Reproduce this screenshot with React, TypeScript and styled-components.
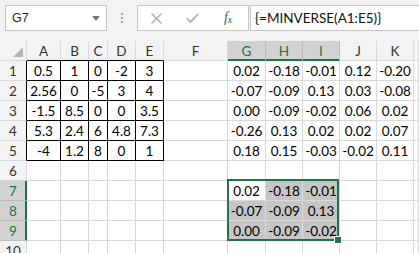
import React from "react";
import styled, { createGlobalStyle } from "styled-components";

const GREEN = "#217346";
const GRID = "#d9d9d9";

const GlobalStyle = createGlobalStyle`
  body {
    margin: 0;
    background: #ffffff;
    font-family: Lato, "Liberation Sans", sans-serif;
  }
`;

const Sheet = styled.div`
  width: 419px;
  height: 253px;
  overflow: hidden;
  background: #fff;
`;

const FormulaBar = styled.div`
  display: flex;
  align-items: flex-start;
  height: 41px;
  box-sizing: border-box;
  padding: 5px 0 0 5px;
  background: #f3f3f3;
`;

const NameBox = styled.div`
  display: flex;
  align-items: center;
  justify-content: space-between;
  box-sizing: border-box;
  width: 102px;
  height: 26px;
  padding: 0 6px 0 6px;
  background: #fff;
  border: 1px solid #c6c6c6;
  font: 12.5px "Liberation Sans", Arial, sans-serif;
  color: #1e1e1e;
`;

const Grip = styled.div`
  display: flex;
  flex-direction: column;
  align-items: center;
  justify-content: center;
  gap: 2px;
  width: 30px;
  height: 26px;
`;

const Dot = styled.span`
  width: 2px;
  height: 2px;
  background: #a6a6a6;
`;

const ButtonBox = styled.div`
  display: grid;
  grid-template-columns: repeat(3, 36px);
  align-items: center;
  justify-items: center;
  box-sizing: border-box;
  width: 112px;
  height: 26px;
  background: #fff;
  border: 1px solid #c6c6c6;
`;

const Fx = styled.span`
  font: italic 14px "Liberation Serif", "DejaVu Serif", serif;
  color: #555;
  letter-spacing: -0.5px;

  sub {
    font-size: 11px;
    vertical-align: -1px;
  }
`;

const FormulaInput = styled.div`
  flex: 1;
  display: flex;
  align-items: center;
  box-sizing: border-box;
  height: 26px;
  margin-left: 1px;
  padding-left: 4px;
  background: #fff;
  border: 1px solid #c6c6c6;
  border-right: none;
  font: 13.5px Lato, "Liberation Sans", sans-serif;
  color: #111;
`;

const Grid = styled.div`
  display: grid;
  grid-template-columns: 27px 34px 28px 19px 28px 28px 64px 38px 37px 37px 37px 37px 1fr;
  grid-auto-rows: 20px;
  background: #fff;
`;

const Corner = styled.div`
  display: flex;
  align-items: flex-end;
  justify-content: flex-end;
  box-sizing: border-box;
  padding: 0 3px 3px 0;
  background: #f3f3f3;
  border-right: 1px solid ${GRID};
  border-bottom: 1px solid ${GRID};
`;

const ColHead = styled.div<{ $sel?: boolean; $dark?: boolean }>`
  display: flex;
  align-items: center;
  justify-content: center;
  box-sizing: border-box;
  background: ${(p) => (p.$sel ? "#d2d2d2" : "#f3f3f3")};
  color: ${(p) => (p.$sel ? GREEN : "#333")};
  border-right: 1px solid ${(p) => (p.$sel ? "#bcbcbc" : GRID)};
  border-bottom: 1px solid ${(p) => (p.$sel ? GREEN : p.$dark ? "#000" : GRID)};
  box-shadow: ${(p) => (p.$sel ? `inset 0 -1px 0 ${GREEN}` : "none")};
  font-size: 13.5px;
  padding-top: 1px;
  overflow: hidden;
`;

const RowHead = styled(ColHead)`
  border-right: 1px solid ${(p) => (p.$sel ? GREEN : p.$dark ? "#000" : GRID)};
  border-bottom: 1px solid ${(p) => (p.$sel ? "#bcbcbc" : GRID)};
  box-shadow: ${(p) => (p.$sel ? `inset -1px 0 0 ${GREEN}` : "none")};
`;

const Cell = styled.div<{ $dark?: boolean; $fill?: string }>`
  position: relative;
  display: flex;
  align-items: center;
  justify-content: center;
  box-sizing: border-box;
  padding-top: 1px;
  background: ${(p) => p.$fill ?? "#fff"};
  border-right: 1px solid ${(p) => (p.$dark ? "#000" : GRID)};
  border-bottom: 1px solid ${(p) => (p.$dark ? "#000" : GRID)};
  font-size: 13.5px;
  color: #000;
  white-space: nowrap;
`;

const Selection = styled.div`
  position: absolute;
  left: -1px;
  top: -2px;
  width: 112px;
  height: 62px;
  box-sizing: border-box;
  border: 2px solid ${GREEN};
  pointer-events: none;
  z-index: 2;
`;

const FillHandle = styled.span`
  position: absolute;
  right: -5px;
  bottom: -5px;
  width: 6px;
  height: 6px;
  background: ${GREEN};
  border: 1px solid #fff;
`;

const cols = ["A", "B", "C", "D", "E", "F", "G", "H", "I", "J", "K", "L"];

const data: Record<number, string[]> = {
  1: ["0.5", "1", "0", "-2", "3", "", "0.02", "-0.18", "-0.01", "0.12", "-0.20", ""],
  2: ["2.56", "0", "-5", "3", "4", "", "-0.07", "-0.09", "0.13", "0.03", "-0.08", ""],
  3: ["-1.5", "8.5", "0", "0", "3.5", "", "0.00", "-0.09", "-0.02", "0.06", "0.02", ""],
  4: ["5.3", "2.4", "6", "4.8", "7.3", "", "-0.26", "0.13", "0.02", "0.02", "0.07", ""],
  5: ["-4", "1.2", "8", "0", "1", "", "0.18", "0.15", "-0.03", "-0.02", "0.11", ""],
  7: ["", "", "", "", "", "", "0.02", "-0.18", "-0.01", "", "", ""],
  8: ["", "", "", "", "", "", "-0.07", "-0.09", "0.13", "", "", ""],
  9: ["", "", "", "", "", "", "0.00", "-0.09", "-0.02", "", "", ""],
};

const selRows = [7, 8, 9];
const selCols = [6, 7, 8];

export default function App() {
  const rows = Array.from({ length: 10 }, (_, i) => i + 1);

  return (
    <Sheet>
      <GlobalStyle />
      <FormulaBar>
        <NameBox>
          G7
          <svg width="8" height="5" viewBox="0 0 8 5">
            <path d="M0 0h8L4 5z" fill="#7b7b7b" />
          </svg>
        </NameBox>
        <Grip>
          <Dot />
          <Dot />
          <Dot />
        </Grip>
        <ButtonBox>
          <svg width="11" height="11" viewBox="0 0 11 11">
            <path d="M0.5 0.5l10 10M10.5 0.5l-10 10" stroke="#a8a8a8" strokeWidth="1.3" />
          </svg>
          <svg width="13" height="10" viewBox="0 0 13 10">
            <path d="M0.8 5.2l3.8 3.8L12.3 0.8" stroke="#b4b4b4" strokeWidth="1.9" fill="none" />
          </svg>
          <Fx>
            f<sub>x</sub>
          </Fx>
        </ButtonBox>
        <FormulaInput>{"{=MINVERSE(A1:E5)}"}</FormulaInput>
      </FormulaBar>

      <Grid>
        <Corner>
          <svg width="10" height="10" viewBox="0 0 10 10">
            <path d="M10 0v10H0z" fill="#b6b6b6" />
          </svg>
        </Corner>
        {cols.map((c, ci) => (
          <ColHead key={c} $sel={selCols.includes(ci)} $dark={ci < 5}>
            {c === "L" ? "" : c}
          </ColHead>
        ))}
        {rows.map((r) => (
          <React.Fragment key={r}>
            <RowHead $sel={selRows.includes(r)} $dark={r <= 5}>
              {r}
            </RowHead>
            {cols.map((c, ci) => {
              const v = data[r]?.[ci] ?? "";
              const inSel = selRows.includes(r) && selCols.includes(ci);
              const active = r === 7 && ci === 6;
              return (
                <Cell
                  key={c}
                  $dark={r <= 5 && ci < 5}
                  $fill={inSel && !active ? "#c6c6c6" : undefined}
                >
                  {v}
                  {active && (
                    <Selection>
                      <FillHandle />
                    </Selection>
                  )}
                </Cell>
              );
            })}
          </React.Fragment>
        ))}
      </Grid>
    </Sheet>
  );
}
